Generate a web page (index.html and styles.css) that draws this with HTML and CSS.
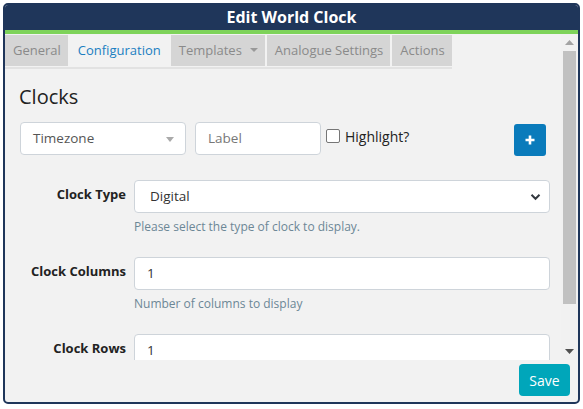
FILE: index.html
```html
<!DOCTYPE html>
<html>
<head>
<meta charset="utf-8">
<link rel="stylesheet" href="styles.css">
</head>
<body>
<div class="modal">
  <div class="title">Edit World Clock</div>
  <div class="scroll">
    <div class="viewport">
      <div class="tabs">
        <div class="tab">General</div>
        <div class="tab active">Configuration</div>
        <div class="tab">Templates <span class="caret"></span></div>
        <div class="tab">Analogue Settings</div>
        <div class="tab">Actions</div>
      </div>
      <div class="content">
        <h2 class="heading">Clocks</h2>
        <div class="clock-row">
          <div class="field tz">Timezone<span class="tz-caret"></span></div>
          <div class="field label-input">Label</div>
          <label class="check"><span class="box"></span>Highlight?</label>
          <div class="plus-wrap">
            <button class="plus"><svg width="12" height="12" viewBox="0 0 12 12"><path d="M6 1.5v9M1.5 6h9" stroke="#fff" stroke-width="2.6"/></svg></button>
          </div>
        </div>
        <div class="form-row">
          <div class="flabel">Clock Type</div>
          <div class="fcol">
            <div class="field sel">Digital<svg class="chev" width="11" height="8" viewBox="0 0 11 8"><path d="M1.5 1.8l4 4 4-4" stroke="#343a40" stroke-width="2" fill="none"/></svg></div>
            <div class="help">Please select the type of clock to display.</div>
          </div>
        </div>
        <div class="form-row">
          <div class="flabel">Clock Columns</div>
          <div class="fcol">
            <div class="field num">1</div>
            <div class="help">Number of columns to display</div>
          </div>
        </div>
        <div class="form-row">
          <div class="flabel">Clock Rows</div>
          <div class="fcol">
            <div class="field num">1</div>
          </div>
        </div>
      </div>
    </div>
    <div class="sbar">
      <div class="sbtn"><svg width="9" height="5" viewBox="0 0 9 5"><path d="M0 5L4.5 0L9 5z" fill="#a3a3a3"/></svg></div>
      <div class="strack"><div class="sthumb"></div></div>
      <div class="sbtn"><svg width="9" height="5" viewBox="0 0 9 5"><path d="M0 0L4.5 5L9 0z" fill="#505050"/></svg></div>
    </div>
  </div>
  <div class="footer"><button class="save">Save</button></div>
</div>
</body>
</html>
```
FILE: styles.css
```css
html, body { margin: 0; padding: 0; background: #fff; }
body { font-family: "Open Sans", "Noto Sans", sans-serif; }
.modal {
  margin: 3px 0 0 3px;
  width: 577px;
  height: 401px;
  box-sizing: border-box;
  border: 2px solid #1f365a;
  border-radius: 5px;
  background: #f2f2f2;
  display: flex;
  flex-direction: column;
  overflow: hidden;
}
.title {
  background: #1f365a;
  color: #fff;
  font-weight: 700;
  font-size: 16px;
  height: 25px;
  line-height: 24px;
  text-align: center;
  border-bottom: 4px solid #7ed35a;
  flex: none;
}
.scroll {
  height: 326px;
  flex: none;
  display: flex;
}
.viewport { flex: 1; overflow: hidden; }
.sbar { width: 17px; flex: none; display: flex; flex-direction: column; background: #f1f1f1; }
.sbtn { height: 17px; display: flex; align-items: center; justify-content: center; flex: none; }
.strack { flex: 1; padding: 0 2px; }
.sthumb { height: 253px; background: #c1c1c1; }
.tabs {
  display: inline-flex;
  margin-top: 1px;
  padding-bottom: 1px;
  border-bottom: 2px solid #e2e2e2;
  gap: 2px;
}
.tab {
  background: #d5d5d5;
  color: #8a8a8a;
  font-size: 13px;
  height: 31px;
  line-height: 31px;
  padding: 0 7px 0 8px;
  display: flex;
  align-items: center;
  gap: 8px;
}
.tab.active { background: #f2f2f2; color: #1a7fc1; margin-left: -2px; padding: 0 8px 0 10px; }
.caret { width: 0; height: 0; border-left: 4px solid transparent; border-right: 4px solid transparent; border-top: 4px solid #999; margin-top: -1px; }
.content { padding: 0 11px 0 15px; }
.heading {
  margin: 15px 0 12px -1px;
  font-size: 20px;
  font-weight: 500;
  color: #222;
  line-height: 26px;
}
.field {
  box-sizing: border-box;
  height: 33px;
  border: 1px solid #ced4da;
  border-radius: 4px;
  background: #fff;
  font-size: 13.5px;
  line-height: 31px;
  padding: 0 12px;
  color: #333;
}
.clock-row { display: flex; align-items: flex-start; }
.tz { width: 166px; color: #555; position: relative; }
.tz-caret { position: absolute; right: 11px; top: 14px; width: 0; height: 0; border-left: 4px solid transparent; border-right: 4px solid transparent; border-top: 5px solid #aaa; }
.label-input { width: 126px; margin-left: 9px; color: #777; }
.check { display: flex; align-items: center; margin-left: 5px; font-size: 14px; color: #222; height: 24px; margin-top: 2px; }
.box { width: 12px; height: 12px; border: 1px solid #767676; border-radius: 2px; background: #fff; margin-right: 5px; }
.plus-wrap { flex: 1; display: flex; justify-content: flex-end; padding-right: 4px; }
.plus { width: 32px; height: 32px; margin-top: 2px; border: none; border-radius: 3px; background: #0a7bbb; display: flex; align-items: center; justify-content: center; padding: 0; }
.form-row { display: flex; margin-top: 24px; }
.form-row + .form-row { margin-top: 22px; }
.flabel { width: 114px; flex: none; box-sizing: border-box; padding-right: 8px; text-align: right; font-weight: 700; font-size: 13px; color: #222; line-height: 20px; padding-top: 4px; }
.fcol { flex: 1; }
.sel { position: relative; padding-left: 15px; }
.chev { position: absolute; right: 8px; top: 12px; }
.help { font-size: 12px; color: #6c8796; margin-top: 5px; line-height: 17px; }
.footer { flex: 1; display: flex; justify-content: flex-end; align-items: flex-start; padding: 4px 8px 0 0; }
.save { width: 51px; height: 32px; border: none; border-radius: 4px; background: #00a6ba; color: #fff; font-family: "Open Sans", sans-serif; font-size: 14px; padding: 0; }
```
